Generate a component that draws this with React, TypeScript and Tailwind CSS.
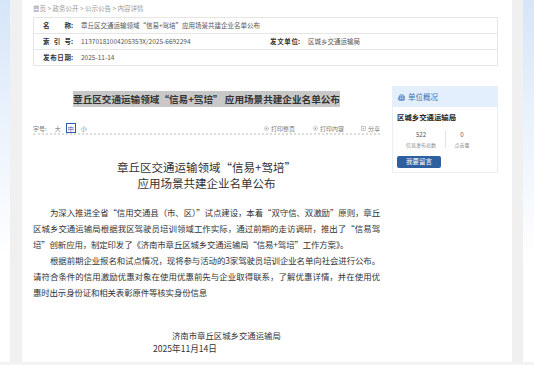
import { Building2 } from 'lucide-react'

const cjk = "font-['Microsoft_YaHei','Noto_Sans_CJK_SC',sans-serif]"

function Label({ chars }: { chars: string[] }) {
  return (
    <span className="flex w-[38px] shrink-0 font-bold text-[#333]">
      <span className="flex w-[28px] justify-between">
        {chars.map((c, i) => (
          <span key={i}>{c}</span>
        ))}
      </span>
      <span>:</span>
    </span>
  )
}

function PrintIcon() {
  return (
    <svg width="5" height="5" viewBox="0 0 10 10" className="mr-[2px]">
      <circle cx="5" cy="5" r="4" fill="none" stroke="#999" strokeWidth="1" />
      <circle cx="5" cy="5" r="1.5" fill="#999" />
    </svg>
  )
}

function ShareIcon() {
  return (
    <svg width="5" height="5" viewBox="0 0 10 10" className="mr-[2px]">
      <rect x="1" y="1" width="8" height="8" fill="none" stroke="#999" strokeWidth="1" />
      <path d="M3 5h4M5 3v4" stroke="#999" strokeWidth="1" />
    </svg>
  )
}

export default function App() {
  return (
    <div className={`flex h-[365px] flex-col overflow-hidden bg-[linear-gradient(to_bottom,#d6e5f8,#eaf2fc_120px,#ffffff_260px)] ${cjk}`}>
      <div className="ml-[10px] h-[362px] w-[513px] shrink-0 bg-[#f0f0f0] pl-[12px] pr-[11px]">
        <div className="h-full bg-white pl-[11px] pr-[14px]">
          {/* 面包屑 */}
          <div className="flex h-[17px] items-center text-[6.5px] text-[#999]">
            首页 &gt; 政务公开 &gt; 公示公告 &gt; 内容详情
          </div>

          {/* 信息表 */}
          <div className="border border-[#e6e6e6] text-[6.5px] text-[#555]">
            <div className="flex h-[16px] items-center border-b border-[#e6e6e6] pl-[9px]">
              <Label chars={['名', '称']} />
              <span>章丘区交通运输领域“信易+驾培”应用场景共建企业名单公布</span>
            </div>
            <div className="grid h-[16px] grid-cols-2 items-center border-b border-[#e6e6e6] pl-[9px]">
              <div className="flex items-center">
                <Label chars={['索', '引', '号']} />
                <span>11370181004205353X/2025-6692294</span>
              </div>
              <div className="flex items-center">
                <Label chars={['发', '文', '单', '位']} />
                <span>区城乡交通运输局</span>
              </div>
            </div>
            <div className="flex h-[15px] items-center pl-[9px]">
              <Label chars={['发', '布', '日', '期']} />
              <span>2025-11-14</span>
            </div>
          </div>

          <div className="mt-[20px] flex gap-[12px]">
            {/* 正文 */}
            <div className="w-[347px] shrink-0">
              <h1 className="pt-[7px] text-center text-[9.6px] font-bold leading-[13px] text-[#333]">
                <span className="bg-[#c8c8c8] py-[1px]">章丘区交通运输领域“信易+驾培” 应用场景共建企业名单公布</span>
              </h1>

              <div className="mt-[17px] flex h-[12px] items-center border-b-2 border-dotted border-[#dcdcdc] text-[6px] text-[#777]">
                <span>字号:</span>
                <span className="ml-[8px]">大</span>
                <span className="ml-[5px] flex h-[10px] w-[10px] items-center justify-center border border-[#2a5caa] text-[#2a5caa]">中</span>
                <span className="ml-[5px]">小</span>
                <span className="ml-auto flex items-center">
                  <PrintIcon />
                  打印整页
                </span>
                <span className="ml-[18px] flex items-center">
                  <PrintIcon />
                  打印内容
                </span>
                <span className="ml-[17px] flex items-center">
                  <ShareIcon />
                  分享
                </span>
              </div>

              <div className="mt-[24px] text-center text-[11.5px] leading-[16px] text-[#333]">
                <p>章丘区交通运输领域“信易+驾培”</p>
                <p>应用场景共建企业名单公布</p>
              </div>

              <div className="mt-[13px] text-justify text-[8.45px] leading-[16px] tracking-[-0.15px] text-[#333]">
                <p className="indent-[17px]">
                  为深入推进全省“信用交通县（市、区）”试点建设，本着“双守信、双激励”原则，章丘区城乡交通运输局根据我区驾驶员培训领域工作实际，通过前期的走访调研，推出了“信易驾培”创新应用，制定印发了《济南市章丘区城乡交通运输局“信易+驾培”工作方案》。
                </p>
                <p className="indent-[17px]">
                  根据前期企业报名和试点情况，现将参与活动的3家驾驶员培训企业名单向社会进行公布。请符合条件的信用激励优惠对象在使用优惠前先与企业取得联系，了解优惠详情，并在使用优惠时出示身份证和相关表彰原件等核实身份信息
                </p>
              </div>

              <div className="mt-[29px] text-[8.4px] leading-[13px] text-[#333]">
                <p className="pl-[139px]">济南市章丘区城乡交通运输局</p>
                <p className="pl-[120px] text-[8.6px]">2025年11月14日</p>
              </div>
            </div>

            {/* 侧栏 */}
            <div className="w-[106px] shrink-0">
              <div className="border border-[#e8eef5]">
                <div className="flex h-[20px] items-center gap-[3px] bg-[#e3effc] pl-[5px] text-[7.5px] text-[#3d6db0]">
                  <Building2 size={7} strokeWidth={2.5} />
                  <span>单位概况</span>
                </div>
                <div className="px-[4px] pb-[4px]">
                  <div className="mt-[4px] text-[7.4px] font-bold leading-[12px] text-[#222]">区城乡交通运输局</div>
                  <div className="mt-[7px] flex items-center">
                    <div className="flex w-[48px] flex-col items-center">
                      <span className="text-[6px] leading-[9px] text-[#555]">522</span>
                      <span className="mt-[2px] text-[5px] leading-[7px] text-[#888]">信息发布总数</span>
                    </div>
                    <div className="h-[17px] w-px bg-[#e2e2e2]" />
                    <div className="flex w-[32px] flex-col items-center">
                      <span className="text-[6px] leading-[9px] text-[#555]">0</span>
                      <span className="mt-[2px] text-[5px] leading-[7px] text-[#888]">点击量</span>
                    </div>
                  </div>
                  <button className="mt-[8px] flex h-[12px] w-[44px] items-center justify-center rounded-[2px] bg-[#2e5f9f] text-[6.5px] text-white">
                    我要留言
                  </button>
                </div>
              </div>
            </div>
          </div>
        </div>
      </div>
      <div className="h-[3px] shrink-0 bg-[#f3f3f3]" />
    </div>
  )
}
